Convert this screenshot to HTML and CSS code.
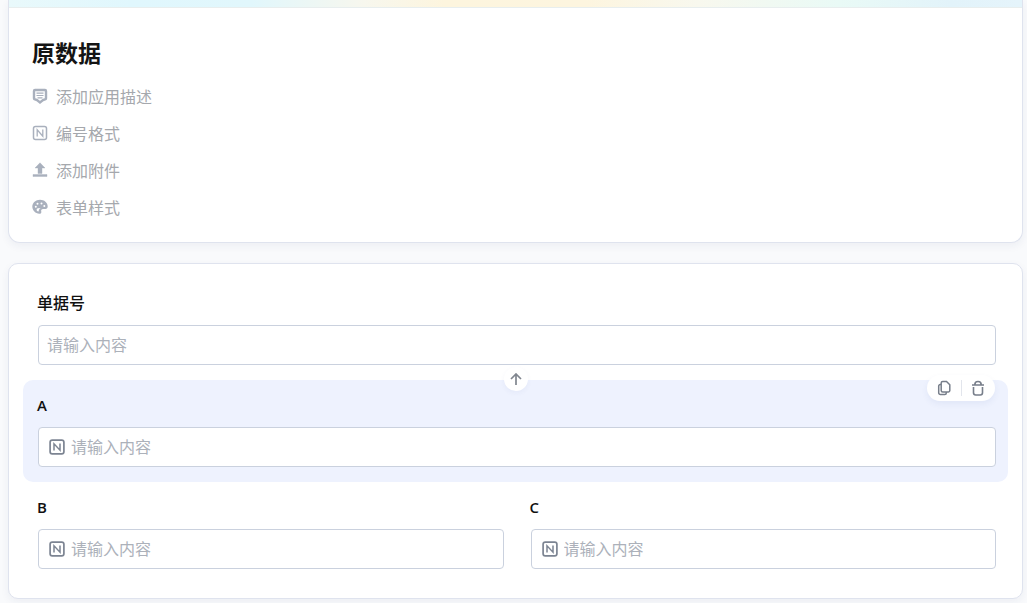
FILE: index.html
```html
<!DOCTYPE html>
<html lang="zh-CN">
<head>
<meta charset="utf-8">
<meta name="viewport" content="width=device-width, initial-scale=1">
<title>原数据</title>
<link rel="stylesheet" href="styles.css">
</head>
<body>
<svg class="sprite" aria-hidden="true">
  <symbol id="number" viewBox="0 0 16 16">
    <rect x="1.1" y="1.1" width="13.8" height="13.8" rx="2.2" fill="none" stroke="currentColor" stroke-width="1.7"/>
    <path d="M5 11.4V4.8L11 11.2V4.6" fill="none" stroke="currentColor" stroke-width="1.5"/>
  </symbol>
</svg>
<main class="page">
  <section class="card summary">
    <div class="banner"></div>
    <div class="summary-body">
      <h1 class="title">原数据</h1>
      <ul class="settings">
        <li><button type="button" class="setting">
          <svg class="setting-icon" viewBox="0 0 16 16" aria-hidden="true"><path d="M3 2h10a1 1 0 0 1 1 1v7.200a1 1 0 0 1-.5.9L11 12l-3 2.400L5 12l-2.500-.9a1 1 0 0 1-.5-.9V3a1 1 0 0 1 1-1Z" fill="none" stroke="currentColor" stroke-width="2.400"/><path d="M4.500 5.200h7M4.500 7.500h7M5.500 9.800h5" fill="none" stroke="currentColor" stroke-width="1.200"/></svg>
          <span>添加应用描述</span></button></li>
        <li><button type="button" class="setting">
          <svg class="setting-icon" viewBox="0 0 16 16" aria-hidden="true"><rect x="1.500" y="1.500" width="13" height="13" rx="2" fill="none" stroke="currentColor" stroke-width="1.500"/><path d="M5.200 11.400V4.800l5.600 6.400V4.600" fill="none" stroke="currentColor" stroke-width="1.300"/></svg>
          <span>编号格式</span></button></li>
        <li><button type="button" class="setting">
          <svg class="setting-icon" viewBox="0 0 16 16" aria-hidden="true"><path d="M8 .8 13 6H10v5.500H6V6H3ZM1 12.500h14v2H1Z" fill="currentColor" stroke="currentColor" stroke-width=".4"/></svg>
          <span>添加附件</span></button></li>
        <li><button type="button" class="setting">
          <svg class="setting-icon" viewBox="0 0 16 16" aria-hidden="true"><path fill="currentColor" fill-rule="evenodd" d="M8 .8C3.700.8.3 3.800.3 7.600c0 3.900 3.300 7.200 7 7.200 1.500 0 2.300-.9 2-2.100-.5-1.700.2-2.700 1.900-2.700h2.300c1.400 0 2.200-.9 2.200-2.500C15.700 3.700 12.200.8 8 .8ZM3.800 6.800a1 1 0 1 0 0 2 1 1 0 0 0 0-2ZM5.500 3.700a1 1 0 1 0 0 2 1 1 0 0 0 0-2ZM9.500 3.400a1 1 0 1 0 0 2 1 1 0 0 0 0-2ZM12.300 5.900a1 1 0 1 0 0 2 1 1 0 0 0 0-2ZM6 9.200a1.500 1.500 0 0 0 .5 3.300c.5-2 .9-2.800 2.200-3.500Z"/></svg>
          <span>表单样式</span></button></li>
      </ul>
    </div>
  </section>

  <section class="card form">
    <div class="row">
      <div class="field">
        <label class="label" for="doc">单据号</label>
        <div class="control plain"><input class="input" id="doc" type="text" placeholder="请输入内容"></div>
      </div>
    </div>
    <div class="row selected">
      <button type="button" class="move-up" aria-label="上移">
        <svg class="arrow" viewBox="0 0 12 12" aria-hidden="true"><path d="M6 12V1M1 6l5-5 5 5" fill="none" stroke="currentColor" stroke-width="1.700"/></svg>
      </button>
      <div class="tools">
        <button type="button" class="tool" aria-label="复制">
          <svg class="tool-icon" viewBox="0 0 16 16" aria-hidden="true"><path d="M6.700 1.500h3.800l3.300 3.300v5.700a1.500 1.500 0 0 1-1.500 1.500H6.700a1.500 1.500 0 0 1-1.500-1.500V3a1.500 1.500 0 0 1 1.500-1.500ZM5 4.500h-.8A1.500 1.500 0 0 0 2.700 6v6.800a1.700 1.700 0 0 0 1.700 1.700h4.400a1.500 1.500 0 0 0 1.500-1.500v-.7" fill="none" stroke="currentColor" stroke-width="1.500"/></svg>
        </button>
        <span class="divider"></span>
        <button type="button" class="tool" aria-label="删除">
          <svg class="tool-icon" viewBox="0 0 16 16" aria-hidden="true"><path d="M2 5h12M4.800 4.700a3.200 3.200 0 0 1 6.400 0M3.500 7v5.800a2.200 2.200 0 0 0 2.200 2.200h4.600a2.200 2.200 0 0 0 2.200-2.200V7" fill="none" stroke="currentColor" stroke-width="1.600"/></svg>
        </button>
      </div>
      <div class="field">
        <label class="label latin" for="a">A</label>
        <div class="control"><svg class="number-icon" aria-hidden="true"><use href="#number"/></svg><input class="input" id="a" type="text" placeholder="请输入内容"></div>
      </div>
    </div>
    <div class="row">
      <div class="field">
        <label class="label latin" for="b">B</label>
        <div class="control"><svg class="number-icon" aria-hidden="true"><use href="#number"/></svg><input class="input" id="b" type="text" placeholder="请输入内容"></div>
      </div>
      <div class="field">
        <label class="label latin" for="c">C</label>
        <div class="control"><svg class="number-icon" aria-hidden="true"><use href="#number"/></svg><input class="input" id="c" type="text" placeholder="请输入内容"></div>
      </div>
    </div>
  </section>
</main>
</body>
</html>
```
FILE: styles.css
```css
* { box-sizing: border-box; }

body {
  margin: 0;
  background: #f9fafc;
  color: #141414;
  font: 16px/24px "Open Sans", "Noto Sans CJK SC", sans-serif;
}

button, input { font: inherit; }

button {
  padding: 0;
  border: 0;
  background: none;
  cursor: pointer;
}

.sprite { position: absolute; width: 0; height: 0; }

.page {
  display: flex;
  flex-direction: column;
  gap: 20px;
  padding: 0 4px 4px 8px;
}

.card {
  background: #fff;
  border: 1px solid #dfe3ee;
  border-radius: 10px;
  box-shadow: 0 3px 8px rgba(40, 50, 100, 0.06);
}

.summary {
  border-top: 0;
  border-radius: 0 0 12px 12px;
}

.banner {
  height: 8px;
  border-bottom: 1px solid #e8eeee;
  background: linear-gradient(90deg, #e9f9fb 0%, #e0f7fd 12%, #e1f7fc 24%, #f7f7ee 35%, #fdf5de 43%, #fdf5df 57%, #f8f8ee 68%, #e9faf6 82%, #e2f3fa 93%, #e5f4fb 100%);
}

.summary-body { padding: 29px 23px 22px; }

.title {
  margin: 0 0 16px;
  font-size: 23px;
  line-height: 32px;
  font-weight: 700;
}

.settings {
  display: grid;
  gap: 13px;
  margin: 0;
  padding: 0;
  list-style: none;
}

.settings li { display: flex; }

.setting {
  display: flex;
  align-items: center;
  gap: 8px;
  color: #a5a8ad;
}

.setting-icon {
  width: 16px;
  height: 16px;
  margin-bottom: 2px;
  color: #a9b0bd;
}

.form { padding: 14px; }

.row {
  position: relative;
  display: flex;
  border-radius: 10px;
}

.selected { background: #eef2fe; }

.field {
  flex: 1 1 0;
  min-width: 0;
  display: flex;
  flex-direction: column;
  gap: 10px;
  padding: 13px 12px 15px 14px;
}

.label {
  font-size: 16px;
  font-weight: 500;
  color: #111;
}

.latin {
  font-size: 15px;
  font-weight: 600;
}

.control {
  display: flex;
  align-items: center;
  gap: 6px;
  height: 40px;
  margin-left: 1px;
  padding: 0 9px 0 10px;
  border: 1px solid #cad1de;
  border-radius: 4px;
  background: #fff;
}

.plain { padding-left: 8px; }

.control:focus-within { border-color: #7f94e8; }

.number-icon {
  flex: none;
  width: 16px;
  height: 16px;
  color: #7c8492;
}

.input {
  flex: 1;
  min-width: 0;
  padding: 0;
  border: 0;
  outline: 0;
  background: none;
  color: #141414;
}

.input::placeholder { color: #acb1ba; opacity: 1; }

.move-up {
  position: absolute;
  top: -13px;
  left: 50%;
  display: grid;
  place-items: center;
  width: 24px;
  height: 24px;
  margin-left: -12px;
  border-radius: 50%;
  background: #fff;
  box-shadow: 0 2px 5px rgba(60, 80, 150, 0.05);
}

.arrow { width: 12px; height: 12px; color: #80868f; }

.tools {
  position: absolute;
  top: -5px;
  right: 13px;
  display: flex;
  align-items: center;
  width: 68px;
  height: 26px;
  border-radius: 13px;
  background: #fff;
  box-shadow: 0 3px 6px rgba(60, 80, 150, 0.07);
}

.tool {
  flex: 1;
  display: grid;
  place-items: center;
  height: 100%;
  color: #777e8a;
}

.tool-icon { width: 16px; height: 16px; }

.divider { width: 1px; height: 16px; background: #e2e5ec; }
```
